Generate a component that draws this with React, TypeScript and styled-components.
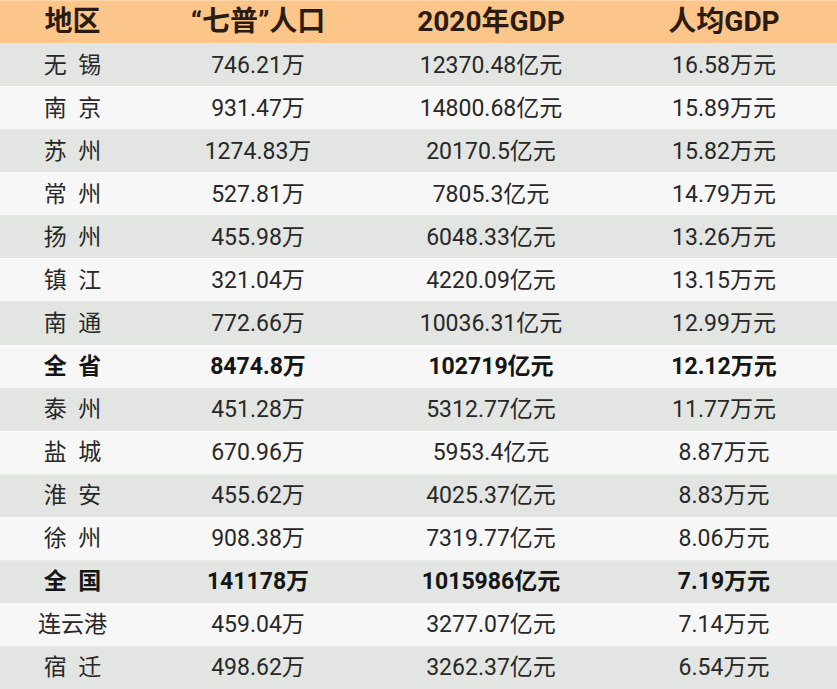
import React from "react";
import styled, { createGlobalStyle } from "styled-components";

const Global = createGlobalStyle`
  html, body { margin: 0; padding: 0; background: #f7f7f7; }
  #root { width: 837px; height: 689px; }
`;

const Table = styled.div`
  width: 837px;
  height: 689px;
  display: grid;
  grid-template-rows: repeat(16, 1fr);
  font-family: Roboto, "Noto Sans CJK SC", sans-serif;
  overflow: hidden;
`;

const Row = styled.div<{ $tone: "head" | "gray" | "white" }>`
  display: grid;
  grid-template-columns: 145px 226px 240px 226px;
  align-items: center;
  background: ${(p) =>
    p.$tone === "head" ? "#fcc58a" : p.$tone === "gray" ? "#e2e5e2" : "#f7f7f7"};
  border-top: 1px solid
    ${(p) => (p.$tone === "head" ? "#fdd7ad" : p.$tone === "gray" ? "#e8ebe8" : "#fbfbfb")};
  box-sizing: border-box;
`;

const HeadCell = styled.div`
  text-align: center;
  font-size: 28px;
  font-weight: 700;
  color: #2a1c12;
  white-space: nowrap;
  line-height: 1;
`;

const Cell = styled.div<{ $bold?: boolean }>`
  text-align: center;
  font-size: 23px;
  font-weight: ${(p) => (p.$bold ? 700 : 400)};
  color: ${(p) => (p.$bold ? "#151515" : "#282828")};
  white-space: nowrap;
  line-height: 1;
`;

type Item = { name: string; pop: string; gdp: string; per: string; bold?: boolean };

const data: Item[] = [
  { name: "无\u2002锡", pop: "746.21万", gdp: "12370.48亿元", per: "16.58万元" },
  { name: "南\u2002京", pop: "931.47万", gdp: "14800.68亿元", per: "15.89万元" },
  { name: "苏\u2002州", pop: "1274.83万", gdp: "20170.5亿元", per: "15.82万元" },
  { name: "常\u2002州", pop: "527.81万", gdp: "7805.3亿元", per: "14.79万元" },
  { name: "扬\u2002州", pop: "455.98万", gdp: "6048.33亿元", per: "13.26万元" },
  { name: "镇\u2002江", pop: "321.04万", gdp: "4220.09亿元", per: "13.15万元" },
  { name: "南\u2002通", pop: "772.66万", gdp: "10036.31亿元", per: "12.99万元" },
  { name: "全\u2002省", pop: "8474.8万", gdp: "102719亿元", per: "12.12万元", bold: true },
  { name: "泰\u2002州", pop: "451.28万", gdp: "5312.77亿元", per: "11.77万元" },
  { name: "盐\u2002城", pop: "670.96万", gdp: "5953.4亿元", per: "8.87万元" },
  { name: "淮\u2002安", pop: "455.62万", gdp: "4025.37亿元", per: "8.83万元" },
  { name: "徐\u2002州", pop: "908.38万", gdp: "7319.77亿元", per: "8.06万元" },
  { name: "全\u2002国", pop: "141178万", gdp: "1015986亿元", per: "7.19万元", bold: true },
  { name: "连云港", pop: "459.04万", gdp: "3277.07亿元", per: "7.14万元" },
  { name: "宿\u2002迁", pop: "498.62万", gdp: "3262.37亿元", per: "6.54万元" },
];

export default function App() {
  return (
    <>
      <Global />
      <Table>
        <Row $tone="head">
          <HeadCell>地区</HeadCell>
          <HeadCell>“七普”人口</HeadCell>
          <HeadCell>2020年GDP</HeadCell>
          <HeadCell>人均GDP</HeadCell>
        </Row>
        {data.map((d, i) => (
          <Row key={d.name} $tone={i % 2 === 0 ? "gray" : "white"}>
            <Cell $bold={d.bold}>{d.name}</Cell>
            <Cell $bold={d.bold}>{d.pop}</Cell>
            <Cell $bold={d.bold}>{d.gdp}</Cell>
            <Cell $bold={d.bold}>{d.per}</Cell>
          </Row>
        ))}
      </Table>
    </>
  );
}
